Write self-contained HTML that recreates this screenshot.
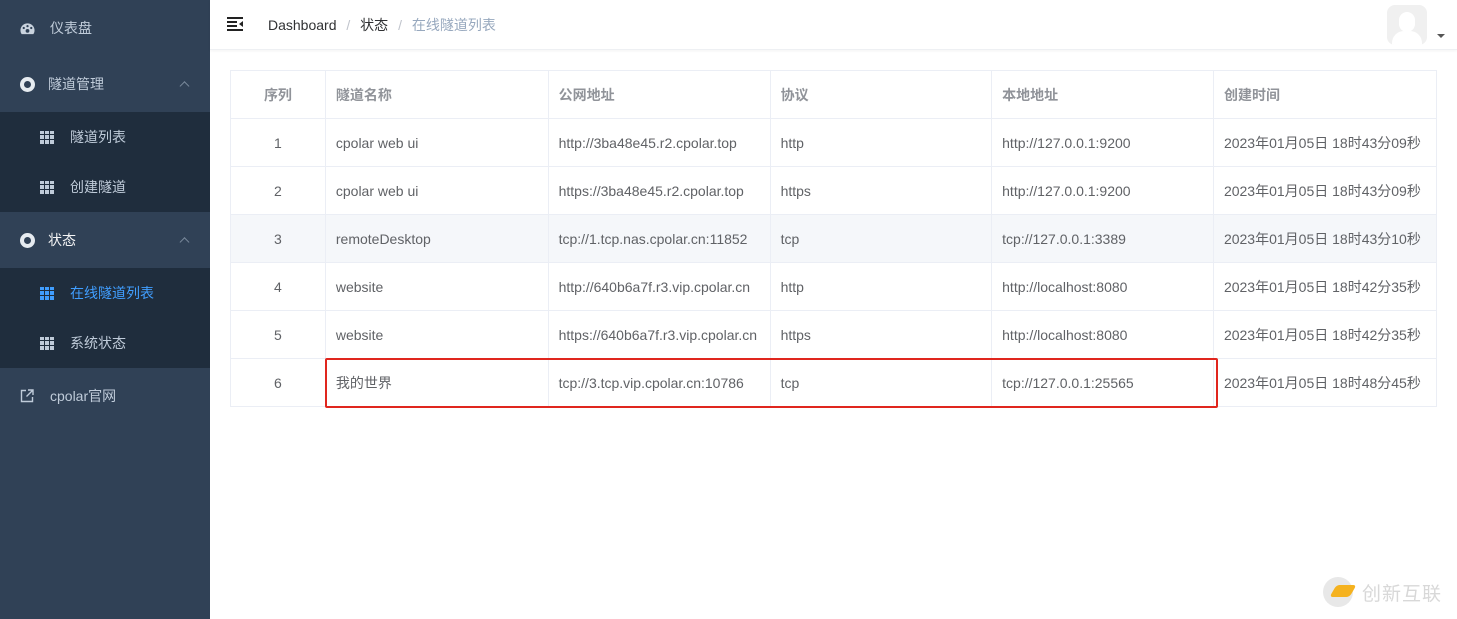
<!DOCTYPE html>
<html><head><meta charset="utf-8"><style>
*{margin:0;padding:0;box-sizing:border-box}
body{width:1457px;height:619px;overflow:hidden;font-family:"Liberation Sans","Noto Sans CJK SC",sans-serif;background:#fff;position:relative}
.side{position:absolute;left:0;top:0;width:210px;height:619px;background:#304156;color:#bfcbd9;font-size:14px}
.it{position:absolute;left:0;width:210px;display:flex;align-items:center}
.sub{background:#1f2d3d}
.arr{position:absolute;right:22px;top:50%;width:7px;height:7px;border-left:1px solid #7a8a9c;border-top:1px solid #7a8a9c;transform:translateY(-20%) rotate(45deg)}
.grid{display:inline-block;width:14px;height:13px;background:
linear-gradient(#bfcbd9,#bfcbd9);position:relative}
.grid:after{content:"";position:absolute;inset:0;background:linear-gradient(90deg,transparent 4px,#1f2d3d 4px,#1f2d3d 5px,transparent 5px,transparent 9px,#1f2d3d 9px,#1f2d3d 10px,transparent 10px),linear-gradient(transparent 3px,#1f2d3d 3px,#1f2d3d 4px,transparent 4px,transparent 8px,#1f2d3d 8px,#1f2d3d 9px,transparent 9px)}
.circ{width:15px;height:15px;border-radius:50%;border:4px solid #e6ebf0;background:#304156;display:inline-block}
.hdr{position:absolute;left:210px;top:0;right:0;height:50px;border-bottom:1px solid #eef0f3;box-shadow:0 1px 3px rgba(0,21,41,.05)}
table{position:absolute;left:230px;top:70px;width:1207px;border-collapse:collapse;font-size:14px;color:#606266}
td,th{border:1px solid #ebeef5;height:48px;padding:0 10px;text-align:left;white-space:nowrap}
th{color:#909399;font-weight:bold}
td:first-child,th:first-child{text-align:center}
</style></head><body>
<div class="side">
 <div class="it" style="top:0;height:56px;padding-left:20px"><svg width="15" height="13" viewBox="0 0 16 13"><path d="M8 1a7.5 7.5 0 0 0-7.5 7.5c0 1.6.5 3 1.3 4h12.4c.8-1 1.3-2.4 1.3-4A7.5 7.5 0 0 0 8 1z" fill="#c9d3de"/><circle cx="8" cy="9" r="2" fill="#304156"/><circle cx="4" cy="6" r="1.2" fill="#304156"/><circle cx="8" cy="4" r="1.2" fill="#304156"/><circle cx="12" cy="6" r="1.2" fill="#304156"/></svg><span style="margin-left:15px">仪表盘</span></div>
 <div class="it" style="top:56px;height:56px;padding-left:20px"><span class="circ"></span><span style="margin-left:13px">隧道管理</span><i class="arr"></i></div>
 <div class="it sub" style="top:112px;height:50px;padding-left:40px"><span class="grid"></span><span style="margin-left:16px">隧道列表</span></div>
 <div class="it sub" style="top:162px;height:50px;padding-left:40px"><span class="grid"></span><span style="margin-left:16px">创建隧道</span></div>
 <div class="it" style="top:212px;height:56px;padding-left:20px;color:#f4f4f5"><span class="circ"></span><span style="margin-left:13px">状态</span><i class="arr"></i></div>
 <div class="it sub" style="top:268px;height:50px;padding-left:40px;color:#409eff"><span class="grid" style="background:#409eff"></span><span style="margin-left:16px">在线隧道列表</span></div>
 <div class="it sub" style="top:318px;height:50px;padding-left:40px"><span class="grid"></span><span style="margin-left:16px">系统状态</span></div>
 <div class="it" style="top:368px;height:56px;padding-left:20px"><svg width="14" height="14" viewBox="0 0 14 14" fill="none" stroke="#bfcbd9" stroke-width="1.4"><path d="M6 1.5H1.5v11h11V8"/><path d="M8 1h5v5M13 1L6.5 7.5"/></svg><span style="margin-left:16px">cpolar官网</span></div>
</div>
<div class="hdr">
 <svg style="position:absolute;left:17px;top:17px" width="16" height="14" viewBox="0 0 16 14" fill="#222"><rect y="0" width="16" height="2"/><rect y="4" width="10" height="2"/><rect y="8" width="10" height="2"/><rect y="12" width="16" height="2"/><path d="M16 4v6l-4-3z"/></svg>
 <div style="position:absolute;left:58px;top:15px;font-size:14px;color:#303133">Dashboard <span style="color:#c0c4cc;margin:0 6px">/</span> 状态 <span style="color:#c0c4cc;margin:0 6px">/</span> <span style="color:#97a8be">在线隧道列表</span></div>
 <div style="position:absolute;left:1177px;top:5px;width:40px;height:40px;border-radius:8px;background:#f0f0f0;overflow:hidden"><div style="position:absolute;left:12px;top:7px;width:16px;height:20px;border-radius:8px;background:#fff"></div><div style="position:absolute;left:5px;top:26px;width:30px;height:20px;border-radius:12px 12px 0 0;background:#fff"></div></div>
 <div style="position:absolute;left:1227px;top:34px;border:4px solid transparent;border-top:4px solid #555;border-bottom:0"></div>
</div>
<table>
<colgroup><col style="width:95px"><col style="width:223px"><col style="width:222px"><col style="width:222px"><col style="width:222px"><col style="width:223px"></colgroup>
<tr><th>序列</th><th>隧道名称</th><th>公网地址</th><th>协议</th><th>本地地址</th><th>创建时间</th></tr>
<tr><td>1</td><td>cpolar web ui</td><td>http://3ba48e45.r2.cpolar.top</td><td>http</td><td>http://127.0.0.1:9200</td><td>2023年01月05日 18时43分09秒</td></tr>
<tr><td>2</td><td>cpolar web ui</td><td>https://3ba48e45.r2.cpolar.top</td><td>https</td><td>http://127.0.0.1:9200</td><td>2023年01月05日 18时43分09秒</td></tr>
<tr style="background:#f5f7fa"><td>3</td><td>remoteDesktop</td><td>tcp://1.tcp.nas.cpolar.cn:11852</td><td>tcp</td><td>tcp://127.0.0.1:3389</td><td>2023年01月05日 18时43分10秒</td></tr>
<tr><td>4</td><td>website</td><td>http://640b6a7f.r3.vip.cpolar.cn</td><td>http</td><td>http://localhost:8080</td><td>2023年01月05日 18时42分35秒</td></tr>
<tr><td>5</td><td>website</td><td>https://640b6a7f.r3.vip.cpolar.cn</td><td>https</td><td>http://localhost:8080</td><td>2023年01月05日 18时42分35秒</td></tr>
<tr><td>6</td><td>我的世界</td><td>tcp://3.tcp.vip.cpolar.cn:10786</td><td>tcp</td><td>tcp://127.0.0.1:25565</td><td>2023年01月05日 18时48分45秒</td></tr>
</table>
<div style="position:absolute;left:325px;top:358px;width:893px;height:50px;border:2px solid #e0261e;border-radius:2px"></div>
<div style="position:absolute;left:1323px;top:577px;width:30px;height:30px;border-radius:50%;background:#e8e8e8"></div>
<div style="position:absolute;left:1333px;top:585px;width:20px;height:12px;background:#f5b21f;transform:skewX(-30deg);border-radius:3px"></div>
<div style="position:absolute;left:1362px;top:579px;font-size:19px;color:#d8d8d8;letter-spacing:1px">创新互联</div>
</body></html>
